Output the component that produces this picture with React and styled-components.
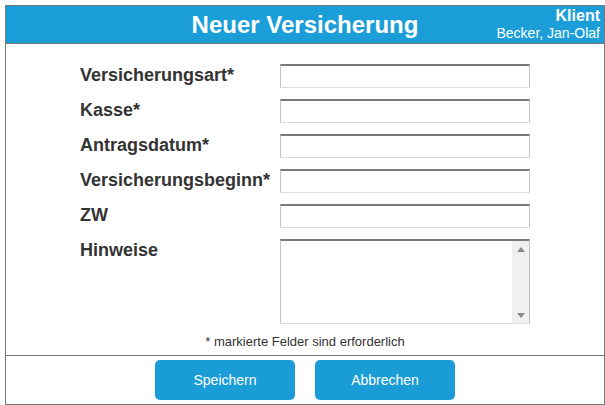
import React from "react";
import styled, { createGlobalStyle } from "styled-components";

const GlobalStyle = createGlobalStyle`
  body {
    margin: 0;
    background: #ffffff;
    font-family: "Liberation Sans", Arial, sans-serif;
  }
`;

const Frame = styled.div`
  box-sizing: border-box;
  margin: 5px 0 0 5px;
  width: 600px;
  height: 400px;
  border: 1px solid #777777;
  display: flex;
  flex-direction: column;
  background: #ffffff;
`;

const Header = styled.div`
  height: 37px;
  background-color: #1b9ed8;
  border-bottom: 1px solid #777777;
  display: grid;
  grid-template-columns: 1fr auto 1fr;
  align-items: center;
  color: #ffffff;
`;

const Title = styled.h1`
  grid-column: 2;
  margin: 0;
  font-size: 24px;
  font-weight: bold;
`;

const Client = styled.div`
  grid-column: 3;
  justify-self: end;
  padding-right: 4px;
  text-align: right;
  display: flex;
  flex-direction: column;
`;

const ClientLabel = styled.span`
  font-size: 16px;
  font-weight: bold;
  line-height: 18px;
`;

const ClientName = styled.span`
  font-size: 14px;
  line-height: 17px;
`;

const Body = styled.div`
  flex: 1;
  display: flex;
  flex-direction: column;
  padding-top: 20px;
`;

const Form = styled.div`
  display: grid;
  grid-template-columns: 200px 250px;
  row-gap: 11px;
  margin-left: 74px;
`;

const Label = styled.label`
  font-size: 18px;
  font-weight: bold;
  color: #333333;
  line-height: 23px;
  white-space: nowrap;
`;

const Field = styled.input`
  box-sizing: border-box;
  width: 250px;
  height: 24px;
  margin: 0;
  padding: 2px 4px;
  border: 1px solid #c4c4c4;
  border-top: 2px solid #7a7a7a;
  border-bottom-color: #dcdcdc;
  font-family: inherit;
  font-size: 14px;
  outline: none;
`;

const NotesBox = styled.div`
  box-sizing: border-box;
  width: 250px;
  height: 85px;
  display: flex;
  border: 1px solid #c4c4c4;
  border-top: 2px solid #7a7a7a;
  border-bottom-color: #dcdcdc;
`;

const Notes = styled.textarea`
  flex: 1;
  margin: 0;
  padding: 2px 4px;
  border: none;
  font-family: inherit;
  font-size: 14px;
  resize: none;
  overflow: hidden;
  outline: none;
`;

const Scrollbar = styled.div`
  width: 17px;
  background: #f0f0f0;
  display: flex;
  flex-direction: column;
  justify-content: space-between;
  align-items: center;
  padding: 6px 0 5px;
`;

const Arrow = styled.span`
  width: 0;
  height: 0;
  border-left: 4px solid transparent;
  border-right: 4px solid transparent;
  ${(p) =>
    p.$down
      ? "border-top: 5px solid #8a8a8a;"
      : "border-bottom: 5px solid #8a8a8a;"}
`;

const Hint = styled.p`
  margin: 10px 0 0;
  text-align: center;
  font-size: 13px;
  color: #333333;
`;

const Footer = styled.div`
  height: 48px;
  border-top: 1px solid #777777;
  display: flex;
  justify-content: center;
  align-items: center;
  gap: 20px;
`;

const Button = styled.button`
  width: 140px;
  height: 40px;
  border: none;
  border-radius: 5px;
  background-color: #1a9cd6;
  color: #ffffff;
  font-family: inherit;
  font-size: 14px;
  cursor: pointer;
`;

const fields = [
  "Versicherungsart*",
  "Kasse*",
  "Antragsdatum*",
  "Versicherungsbeginn*",
  "ZW",
];

export default function App() {
  return (
    <>
      <GlobalStyle />
      <Frame>
        <Header>
          <Title>Neuer Versicherung</Title>
          <Client>
            <ClientLabel>Klient</ClientLabel>
            <ClientName>Becker, Jan-Olaf</ClientName>
          </Client>
        </Header>
        <Body>
          <Form>
            {fields.map((f) => (
              <React.Fragment key={f}>
                <Label>{f}</Label>
                <Field type="text" />
              </React.Fragment>
            ))}
            <Label>Hinweise</Label>
            <NotesBox>
              <Notes />
              <Scrollbar>
                <Arrow />
                <Arrow $down />
              </Scrollbar>
            </NotesBox>
          </Form>
          <Hint>* markierte Felder sind erforderlich</Hint>
        </Body>
        <Footer>
          <Button>Speichern</Button>
          <Button>Abbrechen</Button>
        </Footer>
      </Frame>
    </>
  );
}
